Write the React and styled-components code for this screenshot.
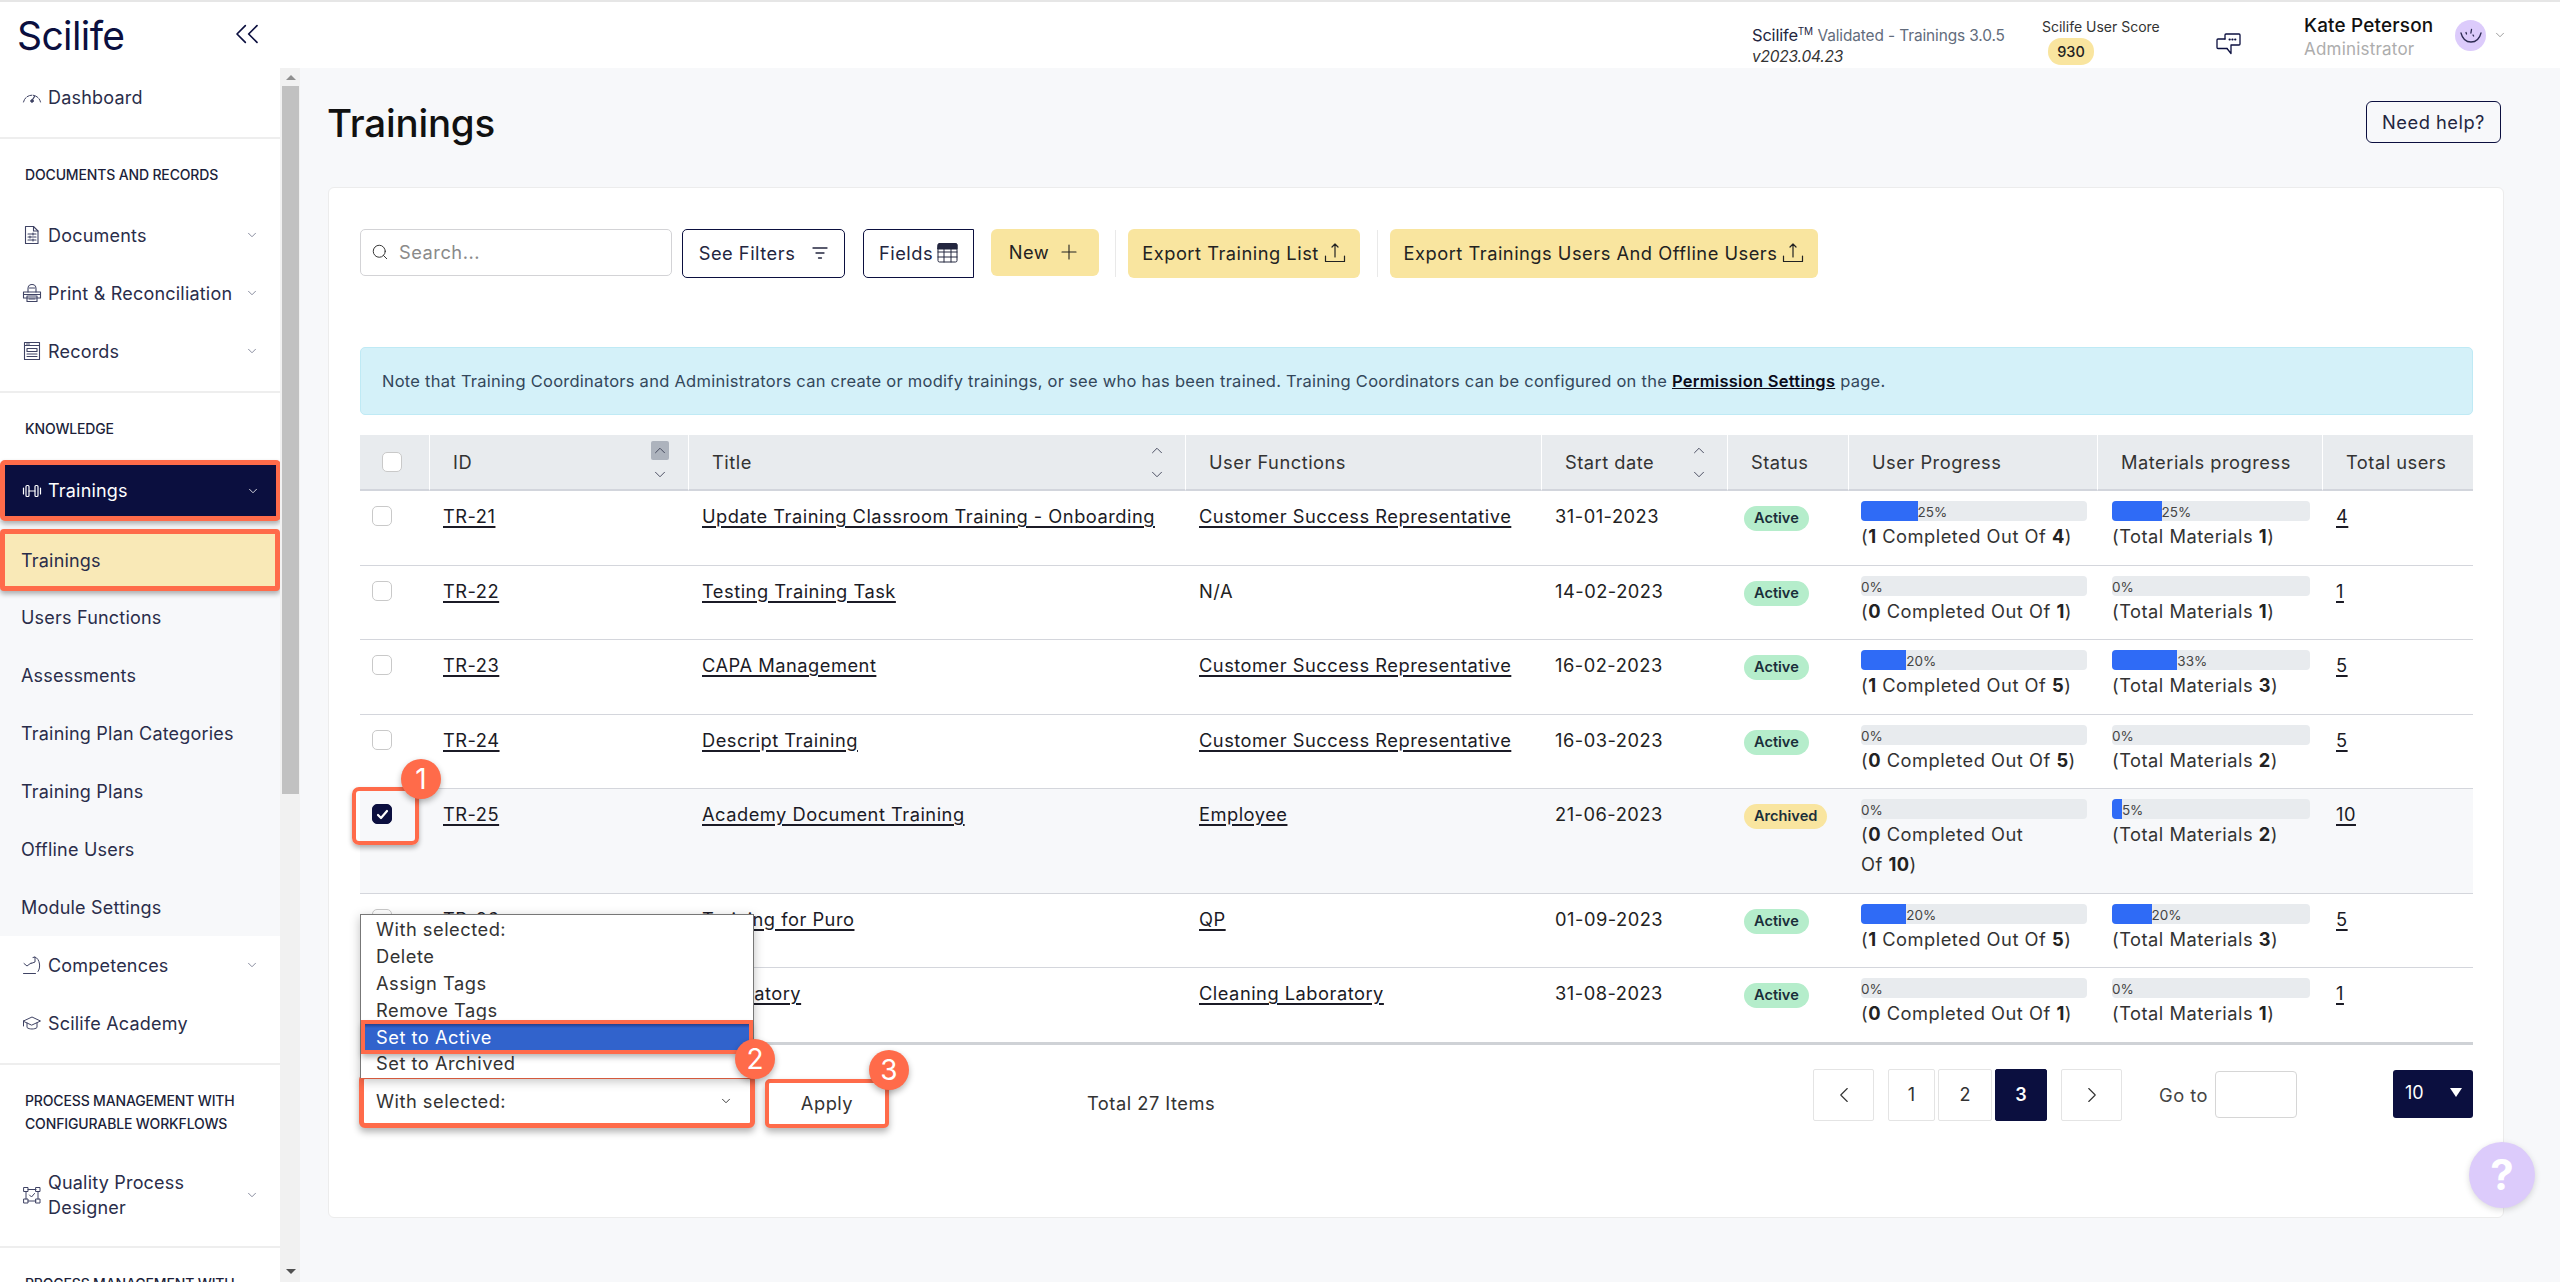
import React from 'react';
import styled, { createGlobalStyle } from 'styled-components';
import { ChevronDown, ChevronUp, ChevronLeft, ChevronRight, ChevronsLeft, Search, Plus } from 'lucide-react';

const NAVY = '#0b0f3f';
const ORANGE = '#ff6b4a';
const INK = '#23263f';
const YELLOW = '#f9e59f';
const TEXT = 'font-size: 18.3px; letter-spacing: 0.5px;';

const Global = createGlobalStyle`
  html, body { margin: 0; padding: 0; background: #f7f8fa; }
  body { font-family: Inter, "Noto Sans", sans-serif; color: ${INK}; }
  * { box-sizing: border-box; }
`;

const Page = styled.div`
  width: 2560px; height: 1282px; overflow: hidden; display: flex; flex-direction: column;
  background: #f7f8fa; position: relative;
`;

/* ---------- top bar ---------- */
const TopBar = styled.header`
  height: 68px; flex: none; display: flex; align-items: stretch; background: #fff;
  border-top: 2px solid #e6e6e6;
`;
const Brand = styled.div`
  width: 280px; display: flex; align-items: center; justify-content: space-between; padding: 0 13px 0 17px;
`;
const Logo = styled.span`
  font-size: 39px; line-height: 44px; color: ${NAVY}; letter-spacing: -0.6px; margin-top: 2px;
`;
const Collapse = styled.span`display: flex; color: ${NAVY}; margin-top: -2px;`;
const TopRight = styled.div`flex: 1; display: flex; padding-left: 1472px;`;
const Version = styled.div`width: 290px; padding-top: 22px; font-size: 16.5px; line-height: 22px; white-space: nowrap; letter-spacing: -0.2px;`;
const VersionGray = styled.span`font-size: 15.4px; color: #626c7c; letter-spacing: -0.1px;`;
const Tm = styled.sup`font-size: 10px; line-height: 0;`;
const VersionNum = styled.div`font-style: italic; font-size: 15.5px; margin-top: -1px; color: #333;`;
const Score = styled.div`width: 173px; padding-top: 16px; font-size: 14px; line-height: 17px; white-space: nowrap; color: #333;`;
const ScoreBadge = styled.div`
  width: 46px; height: 27px; margin: 3px 0 0 6px; border-radius: 13px; background: ${YELLOW};
  display: flex; align-items: center; justify-content: center; font-size: 14.5px; font-weight: 500; color: #222;
`;
const Chat = styled.div`width: 89px; padding-top: 30px; color: ${NAVY};`;
const User = styled.div`width: 151px; padding-top: 12px;`;
const UserName = styled.div`font-size: 18.9px; line-height: 24px; font-weight: 500; color: #111; letter-spacing: 0.2px; white-space: nowrap;`;
const UserRole = styled.div`font-size: 17px; line-height: 22px; color: #adadad; letter-spacing: 0.2px;`;
const Avatar = styled.div`
  width: 31px; height: 31px; margin-top: 18px; border-radius: 50%; background: #dccbfb; display: flex;
  align-items: center; justify-content: center; color: #2c2a52;
`;
const UserCaret = styled.span`display: flex; margin: 26px 0 0 7px; color: #888;`;

/* ---------- body ---------- */
const Body = styled.div`flex: 1; min-height: 0; display: flex;`;
const Side = styled.aside`width: 280px; flex: none; background: #fff; overflow: hidden; display: flex; flex-direction: column;`;
const Divider = styled.div`height: 2px; flex: none; background: #eeeeee; margin-top: 11px;`;
const SectionTitle = styled.div`
  padding: 24px 20px 20px 25px; font-size: 14px; line-height: 23px; font-weight: 500; color: #1c1f3a;
  letter-spacing: -0.15px; flex: none; white-space: nowrap;
`;
const Item = styled.div`
  flex: none; min-height: 58px; display: flex; align-items: center; padding: ${p => (p.$tall ? '15px 20px 15px 22px' : '0 20px 0 22px')};
  font-size: 18px; line-height: 25px; color: #2a2d4a; letter-spacing: 0.1px;
`;
const ItemIcon = styled.span`width: 20px; flex: none; margin-right: 6px; display: flex; color: #3f4364;`;
const ItemLabel = styled.span`flex: 1; letter-spacing: 0.2px; white-space: nowrap;`;
const Caret = styled.span`display: flex; color: #70748a; margin-right: 1px;`;
const ActiveItem = styled.div`
  flex: none; height: 61px; display: flex; align-items: center; background: ${NAVY}; color: #fff;
  border: 5px solid ${ORANGE}; border-radius: 5px; padding: 0 15px 0 17px; margin-right: -1px; font-size: 18px;
  box-shadow: 0 3px 5px rgba(0,0,0,.3); position: relative; z-index: 1;
`;
const ActiveIcon = styled(ItemIcon)`color: #fff;`;
const ActiveCaret = styled(Caret)`color: #fff; margin-right: 1px;`;
const SubList = styled.div`flex: none; background: #f7f8fa; padding-top: 8px;`;
const SubCurrent = styled.div`
  height: 62px; margin-bottom: -3px; display: flex; align-items: center; background: #f9e9b7;
  border: 5px solid ${ORANGE}; border-radius: 4px; padding: 0 0 0 16px; font-size: 18px; letter-spacing: 0.2px;
  box-shadow: 0 3px 5px rgba(0,0,0,.3); position: relative; color: #2a2d4a;
`;
const SubItem = styled.div`
  height: 58px; display: flex; align-items: center; padding-left: 21px; font-size: 18px; letter-spacing: 0.2px; color: #2a2d4a;
`;
const Track = styled.div`
  width: 20px; flex: none; background: #f1f1f1; display: flex; flex-direction: column; align-items: center;
  padding: 5px 0 8px 1px; color: #555;
`;
const Thumb = styled.div`width: 17px; height: 708px; background: #c1c1c1; margin-top: 6px;`;
const ArrowUp = styled.div`width: 0; height: 0; border-left: 5px solid transparent; border-right: 5px solid transparent; border-bottom: 5px solid #8f8f8f; margin-top: 2px;`;
const ArrowDown = styled.div`width: 0; height: 0; border-left: 5px solid transparent; border-right: 5px solid transparent; border-top: 5px solid #505050; margin-top: auto;`;

/* ---------- main ---------- */
const Main = styled.main`flex: 1; min-width: 0; padding: 0 56px 0 28px; display: flex; flex-direction: column;`;
const PageHead = styled.div`height: 119px; flex: none; padding-top: 33px; display: flex; justify-content: space-between; align-items: flex-start;`;
const Title = styled.h1`margin: 0 0 0 -1px; font-size: 38.5px; line-height: 44px; font-weight: 500; color: #111; letter-spacing: -0.2px;`;
const HelpBtn = styled.button`
  width: 135px; height: 42px; margin-right: 3px; background: #f7f8fa; border: 1.5px solid ${NAVY}; border-radius: 6px;
  font: inherit; ${TEXT} color: ${INK}; padding: 0;
`;
const Card = styled.section`
  height: 1031px; flex: none; background: #fff; border: 1px solid #ececec; border-radius: 6px; padding: 41px 30px 0 31px;
`;
const Toolbar = styled.div`display: flex; align-items: flex-start; height: 49px;`;
const SearchBox = styled.div`
  width: 312px; height: 47px; border: 1px solid #d3d3d6; border-radius: 5px; display: flex; align-items: center;
  padding: 0 0 1px 10px; ${TEXT} color: #8a8a8a; gap: 10px;
`;
const OutlineBtn = styled.button`
  width: ${p => p.$w}px; height: 49px; margin-left: ${p => p.$ml}px; background: #fff; border: 1.5px solid ${NAVY};
  border-radius: ${p => (p.$square ? '5px 0 0 5px' : '5px')}; font: inherit; ${TEXT} color: ${INK};
  display: flex; align-items: center; justify-content: center; gap: ${p => p.$gap || 4}px; padding: 0 0 2px;
`;
const YellowBtn = styled.button`
  height: ${p => p.$h || 49}px; width: ${p => p.$w}px; margin-left: ${p => p.$ml || 0}px; background: ${YELLOW}; border: 0; border-radius: 6px; font: inherit; ${TEXT}
  color: #222; display: flex; align-items: center; justify-content: center; gap: ${p => p.$gap || 5}px; padding: 0 0 2px;
`;
const ToolSep = styled.div`width: 1px; height: 47px; background: #e9e9e9; margin: 1px ${p => p.$r}px 0 ${p => p.$l}px;`;
const Alert = styled.div`
  margin-top: 69px; height: 68px; background: #d4f1f9; border: 1px solid #bfeaf5; border-radius: 5px; display: flex;
  align-items: center; padding-left: 21px; font-size: 16.5px; letter-spacing: 0.26px; color: #33475b; white-space: nowrap;
`;
const AlertLink = styled.a`font-weight: 600; color: #0b0b1a; text-decoration: underline;`;

const Table = styled.table`
  margin-top: 20px; width: 2113px; table-layout: fixed; border-collapse: separate; border-spacing: 0;
  ${TEXT} line-height: 30px; color: #222;
`;
const Col = styled.col`width: ${p => p.$w}px;`;
const Th = styled.th`
  height: 56px; padding: 0; background: #e8ebee; border-bottom: 2px solid #d2d5dc; border-right: 1px solid #fff; font-weight: 400;
  text-align: left;
  &:last-child { border-right: 0; }
`;
const ThInner = styled.div`
  display: flex; align-items: center; justify-content: space-between; padding: 0 19px 0 ${p => p.$pl || 23}px;
  ${TEXT} color: #333; white-space: nowrap;
`;
const SortStack = styled.div`display: flex; flex-direction: column; align-items: center; width: 18px; gap: 5px; color: #3c3f55;`;
const SortBtn = styled.span`
  display: flex; width: 18px; height: 19px; align-items: center; justify-content: center; border-radius: 2px;
  background: ${p => (p.$on ? '#adb3bd' : 'transparent')};
`;
const Tr = styled.tr`background: ${p => (p.$sel ? '#f7f8fa' : '#fff')};`;
const Td = styled.td`
  padding: 10px ${p => p.$pr || 8}px 13.5px ${p => p.$pl || 13}px; vertical-align: top;
  border-bottom: ${p => (p.$last ? '3px solid #cfd2d6' : '1px solid #d4d6dc')};
`;
const CheckWrap = styled.div`position: relative; width: 20px; height: 20px; margin-top: 5px; margin-left: -1px;`;
const Check = styled.span`
  display: flex; align-items: center; justify-content: center; width: 20px; height: 20px; border-radius: 5px; background: ${p => (p.$on ? NAVY : '#fff')};
  border: 1px solid ${p => (p.$on ? NAVY : '#c9c9c9')}; color: #fff;
`;
const Link = styled.a`color: #1b1b26; text-decoration: underline; text-underline-offset: 3px; text-decoration-thickness: 1.5px; white-space: nowrap;`;
const Badge = styled.span`
  display: inline-flex; align-items: center; height: 25px; padding: 0 10px; margin-top: 5px; border-radius: 13px; letter-spacing: 0;
  background: ${p => (p.$arch ? YELLOW : '#b5edcb')}; font-size: 14.6px; line-height: 25px; font-weight: 600; color: #1b2f3a;
`;
const BarTrack = styled.div`height: 20px; width: ${p => p.$w}px; background: #e8ebee; border-radius: 4px; display: flex; overflow: hidden; font-size: 13.5px; line-height: 22px; color: #444; letter-spacing: 0;`;
const BarFill = styled.div`background: #2f6bf6; flex: none;`;
const Prog = styled.div`${TEXT} line-height: 30px; color: #333;`;
const Strong = styled.b`font-weight: 700; color: #222;`;

/* ---------- footer ---------- */
const Footer = styled.div`display: flex; align-items: flex-start; padding-top: 24px;`;
const SelectGroup = styled.div`width: 728px; flex: none; display: flex; align-items: flex-start; position: relative; margin-left: -1px;`;
const SelectRing = styled.div`
  position: relative; width: 396px; height: 54px; margin-top: 5px; background: #fff; border: 5px solid ${ORANGE}; border-radius: 6px;
  box-shadow: 0 4px 7px rgba(0,0,0,.3); display: flex; align-items: center; justify-content: space-between;
  padding: 0 17px 0 12px; ${TEXT} color: #333;
`;
const ApplyRing = styled.div`
  position: relative; width: 124px; height: 49px; margin: 10px 0 0 10px; background: #fff; border: 4px solid ${ORANGE}; border-radius: 5px;
  box-shadow: 0 4px 7px rgba(0,0,0,.3); display: flex; align-items: center; justify-content: center; ${TEXT} color: #333;
`;
const Menu = styled.div`
  position: absolute; left: 1px; bottom: calc(100% - 9px); width: 394px; height: 164px; background: #fff; border: 1px solid #777; border-bottom: 0;
  box-shadow: 0 3px 10px rgba(0,0,0,.25); z-index: 2; ${TEXT} color: #333; padding-top: 1px;
`;
const MenuOption = styled.div`height: 27px; line-height: 27px; padding-left: 15px; white-space: nowrap;`;
const MenuActive = styled(MenuOption)`
  position: relative; color: #fff; background: linear-gradient(#23418f 0, #3163cc 4px);
  box-shadow: 0 0 0 4px ${ORANGE}, 0 4px 6px 3px rgba(0,0,0,.3); margin: 0 4px; padding-left: 11px; height: 26px; line-height: 26px; z-index: 1;
`;
const Total = styled.div`${TEXT} color: #333; margin-top: 23px; white-space: nowrap;`;
const PagerGroup = styled.div`margin-left: auto; display: flex; align-items: flex-start;`;
const PageBtn = styled.div`
  width: ${p => p.$w}px; height: 52px; margin-left: ${p => p.$ml || 0}px; background: ${p => (p.$on ? NAVY : '#fff')}; color: ${p => (p.$on ? '#fff' : '#333')};
  border: 1px solid ${p => (p.$on ? NAVY : '#e4e4e4')}; border-radius: 2px; display: flex; align-items: center; justify-content: center; font-size: 18px;
  font-weight: ${p => (p.$on ? 600 : 400)};
`;
const GoTo = styled.div`margin-left: 37px; width: 56px; ${TEXT} line-height: 52px; color: #444; white-space: nowrap;`;
const GoInput = styled.div`width: 82px; height: 47px; margin-top: 2px; background: #fff; border: 1px solid #d6d6d6; border-radius: 4px;`;
const PerPage = styled.div`
  width: 80px; height: 48px; margin: 1px 0 0 96px; background: ${NAVY}; color: #fff; border-radius: 3px; display: flex; align-items: center;
  justify-content: space-between; padding: 0 11px 2px 12px; font-size: 18px;
`;
const Tri = styled.span`width: 0; height: 0; border-left: 6.5px solid transparent; border-right: 6.5px solid transparent; border-top: 9px solid #fff;`;

/* ---------- annotations ---------- */
const Ring = styled.div`
  position: absolute; left: -20px; top: -17px; width: 67px; height: 58px; border: 4px solid ${ORANGE}; border-radius: 7px;
  box-shadow: 0 3px 5px rgba(0,0,0,.3); pointer-events: none;
`;
const Marker = styled.div`
  position: absolute; width: 40px; height: 40px; border-radius: 50%; background: ${ORANGE}; color: #fff; z-index: 4; font-size: 28px; letter-spacing: 0;
  display: flex; align-items: center; justify-content: center; box-shadow: 0 3px 6px rgba(0,0,0,.3);
  left: ${p => p.$x}px; top: ${p => p.$y}px;
`;
const HelpBubble = styled.div`
  position: absolute; left: 2469px; top: 1142px; width: 66px; height: 66px; border-radius: 50%; background: #dccbfb; color: #fff; font-size: 42px; font-weight: 700;
  display: flex; align-items: center; justify-content: center; box-shadow: 0 2px 6px rgba(0,0,0,.15); line-height: 1;
`;

/* ---------- icons ---------- */
const Svg = ({ children, w = 20, h = 20, vb = '0 0 20 20', sw = 1 }) => (
  <svg width={w} height={h} viewBox={vb} fill="none" stroke="currentColor" strokeWidth={sw} strokeLinecap="round" strokeLinejoin="round">{children}</svg>
);
const GaugeIcon = () => <Svg><path d="M1.500 15a8.700 8.700 0 0 1 17 0" strokeDasharray="5 1.500" /><path d="M10 13.500 12.500 9.500" strokeWidth={1.3} /><circle cx="10" cy="14" r="1.300" fill="currentColor" /></Svg>;
const DocIcon = () => <Svg sw={1.1}><path d="M3.500 1.500h8l4.500 4.500v12.500H3.500z" /><path d="M11.500 1.500v4.500H16M6 9h8M6 12h8M6 15h8" /><path d="M11 8v2M8 11v2M11 14v2" /></Svg>;
const PrintIcon = () => <Svg sw={1.1}><path d="M6 9V5.500a4 4 0 0 1 8 0V9" /><path d="M7.500 5h5" /><path d="M1.500 9h17v6h-17zM1.500 11.500h17" /><path d="M5 13h10v5.500H5zM7 16h6" /></Svg>;
const RecordIcon = () => <Svg sw={1.1}><path d="M2.500 1.500h15v17h-15z" /><path d="M2.500 4.500h15M4.500 3h3" /><path d="M5 7.500h10v3H5zM5 13h10M5 15.500h10" /></Svg>;
const DumbbellIcon = () => <Svg sw={1.2}><rect x="4" y="4.500" width="3" height="11" rx="1" /><rect x="13" y="4.500" width="3" height="11" rx="1" /><path d="M1.500 7v6M18.500 7v6M7 10h6" /></Svg>;
const CompIcon = () => <Svg><path d="M13 2c2.500 1 4 3.500 4.500 7 .3 2.500 0 5.500-1.500 7.500" /><path d="M11 2.500l2-.5v5l-4 1.500" /><path d="M2 8.500l3 2.500 4-3" /><path d="M1.500 18.500h12" /></Svg>;
const CapIcon = () => <Svg><path d="M1.500 8 10 4l8.500 4L10 12z" /><path d="M5 10v4.500c2 2 8 2 10 0V10" /><path d="M1.500 8v5" /></Svg>;
const FlowIcon = () => <Svg><path d="M2 2.500h4v4H2zM14 2.500h4v4h-4zM2 14h4v4H2zM14 14h4v4h-4z" /><path d="M6 4.500h8M6 16h8M4 6.500V14M16 6.500V14" /><path d="M7.500 10l2 2 3-3.500" /></Svg>;
const SmileIcon = () => <Svg w={26} h={26} vb="0 0 26 26" sw={1.3}><path d="M3 10c1.500 6 5.500 9 10 9s8.500-3 10-9" /><path d="M8 9.500l.5 1.500M13.500 6.500l-.6 3.500M15 12l.6 1" /></Svg>;
const ChatIcon = () => <Svg w={26} h={24} vb="0 0 26 24" sw={1.3}><path d="M10 7V3a1 1 0 0 1 1-1h13a1 1 0 0 1 1 1v9a1 1 0 0 1-1 1h-8v8.500l-4-5" /><path d="M10 7H3a1 1 0 0 0-1 1v7.500a1 1 0 0 0 1 1h9" /><path d="M14.500 7.500h.3M17.300 7.500h.3M20.100 7.500h.3" strokeWidth={2} /></Svg>;
const FilterIcon = () => <Svg w={16} h={14} vb="0 0 16 14"><path d="M1 2h14M4 7h8M6.500 12h3" strokeWidth={1.3} /></Svg>;
const UploadIcon = () => <Svg w={22} h={22} vb="0 0 22 22" sw={1.2}><path d="M11 2v13M8 5l3-3 3 3" /><path d="M1.500 14v5.500h19V14" /></Svg>;
const TableIcon = () => <Svg w={21} h={21} vb="0 0 21 21" sw={1}><rect x="1" y="1.500" width="19" height="18.500" rx="1.500" /><path d="M1 3a1.500 1.500 0 0 1 1.500-1.500h16A1.500 1.500 0 0 1 20 3v4H1z" fill="currentColor" /><path d="M1 10h19M1 15h19M7 7v13M14 7v13" /></Svg>;
const TickIcon = () => <Svg w={13} h={13} vb="0 0 13 13" sw={2.2}><path d="M2 7l3 3 6-7" /></Svg>;

const CaretD = ({ s = 14 }) => <ChevronDown size={s} strokeWidth={1.4} />;
const Up = () => <ChevronUp size={19} strokeWidth={1.2} />;
const Dn = () => <ChevronDown size={19} strokeWidth={1.2} />;

const rows = [
  { id: 'TR-21', title: 'Update Training Classroom Training - Onboarding', fn: 'Customer Success Representative', date: '31-01-2023', status: 'Active', u: 25, uc: 1, ut: 4, m: 25, mt: 1, total: 4 },
  { id: 'TR-22', title: 'Testing Training Task', fn: null, date: '14-02-2023', status: 'Active', u: 0, uc: 0, ut: 1, m: 0, mt: 1, total: 1 },
  { id: 'TR-23', title: 'CAPA Management', fn: 'Customer Success Representative', date: '16-02-2023', status: 'Active', u: 20, uc: 1, ut: 5, m: 33, mt: 3, total: 5 },
  { id: 'TR-24', title: 'Descript Training', fn: 'Customer Success Representative', date: '16-03-2023', status: 'Active', u: 0, uc: 0, ut: 5, m: 0, mt: 2, total: 5 },
  { id: 'TR-25', title: 'Academy Document Training', fn: 'Employee', date: '21-06-2023', status: 'Archived', u: 0, uc: 0, ut: 10, m: 5, mt: 2, total: 10, sel: true },
  { id: 'TR-26', title: 'Training for Puro', fn: 'QP', date: '01-09-2023', status: 'Active', u: 20, uc: 1, ut: 5, m: 20, mt: 3, total: 5 },
  { id: 'TR-27', title: 'Laboratory', fn: 'Cleaning Laboratory', date: '31-08-2023', status: 'Active', u: 0, uc: 0, ut: 1, m: 0, mt: 1, total: 1, last: true },
];
const widths = [70, 259, 497, 356, 186, 121, 249, 225, 150];

const Bar = ({ w, pct }) => (
  <BarTrack $w={w}>
    {pct > 0 && <BarFill style={{ width: `${pct}%` }} />}
    <span>{pct}%</span>
  </BarTrack>
);

const menuItems = ['With selected:', 'Delete', 'Assign Tags', 'Remove Tags'];

export default function App() {
  return (
    <Page>
      <Global />
      <TopBar>
        <Brand>
          <Logo>Scilife</Logo>
          <Collapse><ChevronsLeft size={40} strokeWidth={1} /></Collapse>
        </Brand>
        <TopRight>
          <Version>
            Scilife<Tm>TM</Tm> <VersionGray>Validated - Trainings 3.0.5</VersionGray>
            <VersionNum>v2023.04.23</VersionNum>
          </Version>
          <Score>
            Scilife User Score
            <ScoreBadge>930</ScoreBadge>
          </Score>
          <Chat><ChatIcon /></Chat>
          <User>
            <UserName>Kate Peterson</UserName>
            <UserRole>Administrator</UserRole>
          </User>
          <Avatar><SmileIcon /></Avatar>
          <UserCaret><CaretD s={14} /></UserCaret>
        </TopRight>
      </TopBar>
      <Body>
        <Side>
          <Item><ItemIcon><GaugeIcon /></ItemIcon><ItemLabel>Dashboard</ItemLabel></Item>
          <Divider />
          <SectionTitle>DOCUMENTS AND RECORDS</SectionTitle>
          <Item><ItemIcon><DocIcon /></ItemIcon><ItemLabel>Documents</ItemLabel><Caret><CaretD /></Caret></Item>
          <Item><ItemIcon><PrintIcon /></ItemIcon><ItemLabel>Print &amp; Reconciliation</ItemLabel><Caret><CaretD /></Caret></Item>
          <Item><ItemIcon><RecordIcon /></ItemIcon><ItemLabel>Records</ItemLabel><Caret><CaretD /></Caret></Item>
          <Divider />
          <SectionTitle>KNOWLEDGE</SectionTitle>
          <ActiveItem>
            <ActiveIcon><DumbbellIcon /></ActiveIcon><ItemLabel>Trainings</ItemLabel>
            <ActiveCaret><CaretD /></ActiveCaret>
          </ActiveItem>
          <SubList>
            <SubCurrent>Trainings</SubCurrent>
            <SubItem>Users Functions</SubItem>
            <SubItem>Assessments</SubItem>
            <SubItem>Training Plan Categories</SubItem>
            <SubItem>Training Plans</SubItem>
            <SubItem>Offline Users</SubItem>
            <SubItem>Module Settings</SubItem>
          </SubList>
          <Item><ItemIcon><CompIcon /></ItemIcon><ItemLabel>Competences</ItemLabel><Caret><CaretD /></Caret></Item>
          <Item><ItemIcon><CapIcon /></ItemIcon><ItemLabel>Scilife Academy</ItemLabel></Item>
          <Divider />
          <SectionTitle>PROCESS MANAGEMENT WITH<br />CONFIGURABLE WORKFLOWS</SectionTitle>
          <Item $tall><ItemIcon><FlowIcon /></ItemIcon><ItemLabel>Quality Process<br />Designer</ItemLabel><Caret><CaretD /></Caret></Item>
          <Divider />
          <SectionTitle>PROCESS MANAGEMENT WITH</SectionTitle>
        </Side>
        <Track>
          <ArrowUp />
          <Thumb />
          <ArrowDown />
        </Track>
        <Main>
          <PageHead>
            <Title>Trainings</Title>
            <HelpBtn>Need help?</HelpBtn>
          </PageHead>
          <Card>
            <Toolbar>
              <SearchBox><Search size={18} strokeWidth={1.3} color="#333" />Search...</SearchBox>
              <OutlineBtn $w={163} $ml={10} $gap={17}>See Filters <FilterIcon /></OutlineBtn>
              <OutlineBtn $w={111} $ml={18} $square>Fields <TableIcon /></OutlineBtn>
              <YellowBtn $w={108} $h={47} $ml={17} $gap={8}>New <Plus size={24} strokeWidth={1.1} /></YellowBtn>
              <ToolSep $l={16} $r={12} />
              <YellowBtn $w={232}>Export Training List <UploadIcon /></YellowBtn>
              <ToolSep $l={17} $r={12} />
              <YellowBtn $w={428}>Export Trainings Users And Offline Users <UploadIcon /></YellowBtn>
            </Toolbar>
            <Alert>
              <span>Note that Training Coordinators and Administrators can create or modify trainings, or see who has been trained. Training Coordinators can be configured on the <AlertLink>Permission Settings</AlertLink> page.</span>
            </Alert>
            <Table>
              <colgroup>{widths.map((w, i) => <Col key={i} $w={w} />)}</colgroup>
              <thead>
                <tr>
                  <Th><ThInner $pl={22}><Check /></ThInner></Th>
                  <Th><ThInner><span>ID</span><SortStack><SortBtn $on><Up /></SortBtn><SortBtn><Dn /></SortBtn></SortStack></ThInner></Th>
                  <Th><ThInner><span>Title</span><SortStack><SortBtn><Up /></SortBtn><SortBtn><Dn /></SortBtn></SortStack></ThInner></Th>
                  <Th><ThInner><span>User Functions</span></ThInner></Th>
                  <Th><ThInner><span>Start date</span><SortStack><SortBtn><Up /></SortBtn><SortBtn><Dn /></SortBtn></SortStack></ThInner></Th>
                  <Th><ThInner><span>Status</span></ThInner></Th>
                  <Th><ThInner><span>User Progress</span></ThInner></Th>
                  <Th><ThInner><span>Materials progress</span></ThInner></Th>
                  <Th><ThInner><span>Total users</span></ThInner></Th>
                </tr>
              </thead>
              <tbody>
                {rows.map(r => (
                  <Tr key={r.id} $sel={r.sel}>
                    <Td $last={r.last}>
                      <CheckWrap>
                        <Check $on={r.sel}>{r.sel && <TickIcon />}</Check>
                        {r.sel && <Ring />}
                        {r.sel && <Marker $x={29} $y={-45}>1</Marker>}
                      </CheckWrap>
                    </Td>
                    <Td $last={r.last}><Link>{r.id}</Link></Td>
                    <Td $last={r.last}><Link>{r.title}</Link></Td>
                    <Td $last={r.last}>{r.fn ? <Link>{r.fn}</Link> : 'N/A'}</Td>
                    <Td $last={r.last}>{r.date}</Td>
                    <Td $last={r.last} $pl={16}><Badge $arch={r.status === 'Archived'}>{r.status}</Badge></Td>
                    <Td $last={r.last} $pl={12} $pr={11}>
                      <Bar w={226} pct={r.u} />
                      <Prog>(<Strong>{r.uc}</Strong> Completed Out{r.ut === 10 ? <br /> : ' '}Of <Strong>{r.ut}</Strong>)</Prog>
                    </Td>
                    <Td $last={r.last} $pl={14} $pr={13}>
                      <Bar w={198} pct={r.m} />
                      <Prog>(Total Materials <Strong>{r.mt}</Strong>)</Prog>
                    </Td>
                    <Td $last={r.last}><Link>{r.total}</Link></Td>
                  </Tr>
                ))}
              </tbody>
            </Table>
            <Footer>
              <SelectGroup>
                <Menu>
                  {menuItems.map(m => <MenuOption key={m}>{m}</MenuOption>)}
                  <MenuActive>Set to Active</MenuActive>
                  <MenuOption>Set to Archived</MenuOption>
                </Menu>
                <SelectRing>
                  With selected:
                  <ChevronDown size={14} strokeWidth={1.6} />
                  <Marker $x={371} $y={-40}>2</Marker>
                </SelectRing>
                <ApplyRing>
                  Apply
                  <Marker $x={100} $y={-33}>3</Marker>
                </ApplyRing>
              </SelectGroup>
              <Total>Total 27 Items</Total>
              <PagerGroup>
                <PageBtn $w={61}><ChevronLeft size={26} strokeWidth={1} /></PageBtn>
                <PageBtn $w={47} $ml={14}>1</PageBtn>
                <PageBtn $w={54} $ml={3}>2</PageBtn>
                <PageBtn $w={52} $ml={3} $on>3</PageBtn>
                <PageBtn $w={61} $ml={14}><ChevronRight size={26} strokeWidth={1} /></PageBtn>
                <GoTo>Go to</GoTo>
                <GoInput />
                <PerPage>10 <Tri /></PerPage>
              </PagerGroup>
            </Footer>
          </Card>
        </Main>
      </Body>
      <HelpBubble>?</HelpBubble>
    </Page>
  );
}
